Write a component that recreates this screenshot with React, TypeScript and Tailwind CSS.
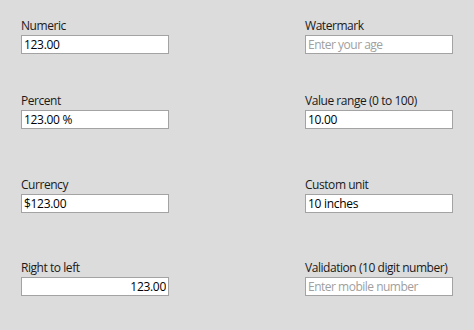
import React from 'react';

type Field = {
  label: string;
  value?: string;
  placeholder?: string;
  rtl?: boolean;
};

const rows: { left: Field; right: Field; mt: string }[] = [
  {
    left: { label: 'Numeric', value: '123.00' },
    right: { label: 'Watermark', placeholder: 'Enter your age' },
    mt: 'mt-[18px]',
  },
  {
    left: { label: 'Percent', value: '123.00 %' },
    right: { label: 'Value range (0 to 100)', value: '10.00' },
    mt: 'mt-[39px]',
  },
  {
    left: { label: 'Currency', value: '$123.00' },
    right: { label: 'Custom unit', value: '10 inches' },
    mt: 'mt-[48px]',
  },
  {
    left: { label: 'Right to left', value: '123.00', rtl: true },
    right: { label: 'Validation (10 digit number)', placeholder: 'Enter mobile number' },
    mt: 'mt-[47px]',
  },
];

function NumericField({ field }: { field: Field }) {
  return (
    <div className="flex flex-col w-[148px]">
      <label className="h-[16px] leading-[16px] text-[12px] tracking-[-0.45px] text-[#1a1a1a] whitespace-nowrap">
        {field.label}
      </label>
      <input
        readOnly
        defaultValue={field.value}
        placeholder={field.placeholder}
        className={`mt-[1px] h-[19px] w-[148px] border border-[#a3a3a3] bg-white px-[2px] text-[12px] leading-[17px] tracking-[-0.3px] text-black outline-none placeholder:text-[#a0a0a0] placeholder:tracking-[-0.5px] ${
          field.rtl ? 'text-right' : 'text-left'
        }`}
      />
    </div>
  );
}

export default function App() {
  return (
    <div
      className="w-[474px] h-[330px] bg-[#dcdcdc] pl-[21px] overflow-hidden"
      style={{ fontFamily: '"Segoe UI", "Open Sans", "Noto Sans", sans-serif' }}
    >
      {rows.map((row) => (
        <div key={row.left.label} className={`flex gap-[136px] ${row.mt}`}>
          <NumericField field={row.left} />
          <NumericField field={row.right} />
        </div>
      ))}
    </div>
  );
}
